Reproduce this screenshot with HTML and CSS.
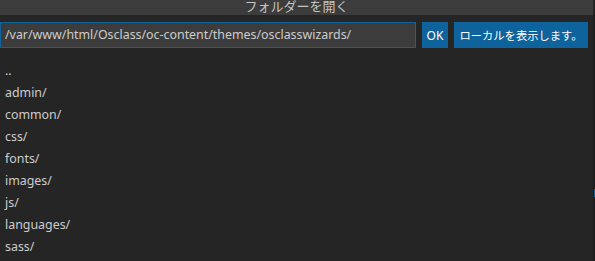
FILE: index.html
```html
<!DOCTYPE html>
<html lang="ja">
<head>
<meta charset="utf-8">
<link rel="stylesheet" href="styles.css">
</head>
<body>
<div class="dialog">
  <div class="titlebar"><span class="title">フォルダーを開く</span></div>
  <div class="inputrow">
    <div class="pathbox">/var/www/html/Osclass/oc-content/themes/osclasswizards/</div>
    <button class="btn ok">OK</button>
    <button class="btn local">ローカルを表示します。</button>
  </div>
  <ul class="list">
    <li>..</li>
    <li>admin/</li>
    <li>common/</li>
    <li>css/</li>
    <li>fonts/</li>
    <li>images/</li>
    <li>js/</li>
    <li>languages/</li>
    <li>sass/</li>
  </ul>
  <div class="edge"><div class="marker"></div></div>
</div>
</body>
</html>
```

FILE: styles.css
```css
html, body {
  margin: 0;
  padding: 0;
  background: #252526;
  overflow: hidden;
}
body {
  font-family: "Noto Sans", "Noto Sans CJK JP", sans-serif;
  color: #cccccc;
  font-size: 12.4px;
}
.dialog {
  position: relative;
  width: 595px;
  height: 261px;
  box-sizing: border-box;
  padding-right: 2px;
}
.titlebar {
  height: 15px;
  background: #3c3c3c;
  overflow: hidden;
  display: flex;
  justify-content: center;
  align-items: flex-start;
}
.title {
  font-size: 13px;
  line-height: 13px;
  margin-top: -1px;
  color: #c4c4c4;
  font-family: "Noto Sans CJK JP", sans-serif;
}
.inputrow {
  display: flex;
  gap: 6px;
  margin-top: 7px;
  padding-right: 5px;
  height: 26px;
}
.pathbox {
  width: 416px;
  box-sizing: border-box;
  border: 1px solid #0e639c;
  background: #3c3c3c;
  color: #cccccc;
  padding-left: 4px;
  line-height: 24px;
  font-size: 12.4px;
  white-space: nowrap;
  overflow: hidden;
}
.btn {
  border: none;
  margin: 0;
  background: #0e639c;
  color: #ffffff;
  font-family: "Noto Sans", "Noto Sans CJK JP", sans-serif;
  font-size: 12px;
  height: 26px;
  padding: 0;
}
.ok {
  width: 26px;
}
.local {
  width: 134px;
  font-family: "Noto Sans CJK JP", sans-serif;
  font-size: 11.3px;
}
.list {
  list-style: none;
  margin: 12px 0 0 0;
  padding: 0 0 0 5px;
}
.list li {
  height: 22px;
  line-height: 22px;
}
.edge {
  position: absolute;
  top: 15px;
  right: 0;
  width: 2px;
  bottom: 0;
  background: #1e1e1e;
}
.marker {
  position: absolute;
  top: 174px;
  left: 1px;
  width: 1px;
  height: 8px;
  background: #0e639c;
}
```
